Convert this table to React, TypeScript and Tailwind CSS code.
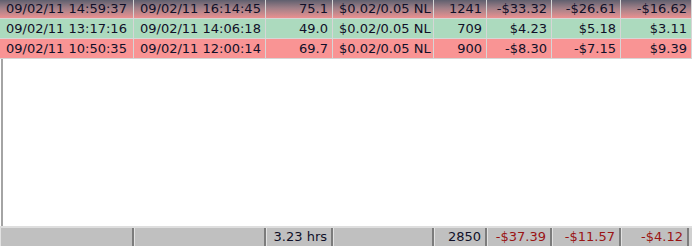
import React from "react";

type Row = {
  start: string;
  end: string;
  mins: string;
  stakes: string;
  hands: string;
  a: string;
  b: string;
  c: string;
  tone: "sel" | "win" | "loss";
};

const rows: Row[] = [
  { start: "09/02/11 14:59:37", end: "09/02/11 16:14:45", mins: "75.1", stakes: "$0.02/0.05 NL", hands: "1241", a: "-$33.32", b: "-$26.61", c: "-$16.62", tone: "sel" },
  { start: "09/02/11 13:17:16", end: "09/02/11 14:06:18", mins: "49.0", stakes: "$0.02/0.05 NL", hands: "709", a: "$4.23", b: "$5.18", c: "$3.11", tone: "win" },
  { start: "09/02/11 10:50:35", end: "09/02/11 12:00:14", mins: "69.7", stakes: "$0.02/0.05 NL", hands: "900", a: "-$8.30", b: "-$7.15", c: "$9.39", tone: "loss" },
];

const cols = "grid grid-cols-[134px_132px_67px_101px_53px_65px_69px_71px]";

const toneClass = {
  sel: "bg-[linear-gradient(#5f5f6e,#a08088_45%,#ea9090)]",
  win: "bg-[#acdabe]",
  loss: "bg-[#f99494]",
};

function Cell({ children, right }: { children: React.ReactNode; right?: boolean }) {
  return (
    <div
      className={`border-r border-[#d6d6d6] whitespace-nowrap overflow-hidden ${
        right ? "text-right pr-[4px]" : "text-left pl-[6px]"
      }`}
    >
      {children}
    </div>
  );
}

function FootCell({ children, red }: { children?: React.ReactNode; red?: boolean }) {
  return (
    <div
      className={`border-r-2 border-r-[#7c7c7c] border-l border-l-[#e2e2e2] text-right pr-[4px] whitespace-nowrap overflow-hidden ${
        red ? "text-[#9a1414]" : "text-[#101028]"
      }`}
    >
      {children}
    </div>
  );
}

export default function App() {
  return (
    <div
      className="w-[692px] h-[246px] bg-white flex flex-col text-[13px] text-[#101028] overflow-hidden"
      style={{ fontFamily: '"DejaVu Sans", Verdana, sans-serif' }}
    >
      <div className="flex-1 flex flex-col">
        {rows.map((r, i) => (
          <div
            key={i}
            className={`${cols} ${toneClass[r.tone]} border-b border-[#d6d6d6] ${
              i === 0 ? "h-[19px] leading-[18px]" : "h-[20px] leading-[19px]"
            }`}
          >
            <Cell>{r.start}</Cell>
            <Cell>{r.end}</Cell>
            <Cell right>{r.mins}</Cell>
            <Cell>{r.stakes}</Cell>
            <Cell right>{r.hands}</Cell>
            <Cell right>{r.a}</Cell>
            <Cell right>{r.b}</Cell>
            <Cell right>{r.c}</Cell>
          </div>
        ))}
        <div className="flex-1 border-l-2 border-l-[#a4a4a4] ml-px" />
      </div>
      <div className="h-[20px] bg-[#c0c0c0] border-t-2 border-t-[#dedede] flex leading-[17px]">
        <div className="grid grid-cols-[134px_132px_67px_101px_53px_65px_69px_68px]">
          <FootCell />
          <FootCell />
          <FootCell>3.23 hrs</FootCell>
          <FootCell />
          <FootCell>2850</FootCell>
          <FootCell red>-$37.39</FootCell>
          <FootCell red>-$11.57</FootCell>
          <FootCell red>-$4.12</FootCell>
        </div>
        <div className="flex-1 bg-[#d0d0d0]" />
      </div>
    </div>
  );
}
